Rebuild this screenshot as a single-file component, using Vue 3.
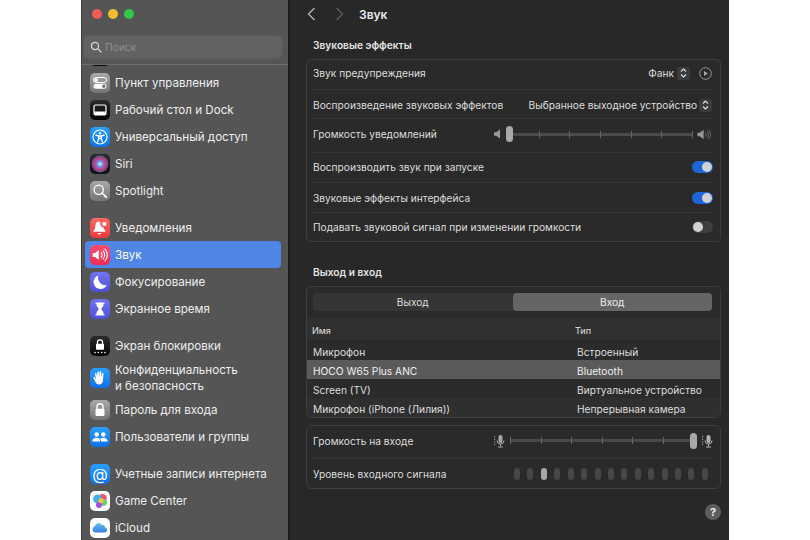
<script setup>
const groups = [
  [{ k: 'dock0', t: '' }, { k: 'cc', t: 'Пункт управления' }, { k: 'dock', t: 'Рабочий стол и Dock' }, { k: 'acc', t: 'Универсальный доступ' }, { k: 'siri', t: 'Siri' }, { k: 'spot', t: 'Spotlight' }],
  [{ k: 'bell', t: 'Уведомления' }, { k: 'sound', t: 'Звук', active: true }, { k: 'moon', t: 'Фокусирование' }, { k: 'hour', t: 'Экранное время' }],
  [{ k: 'lock', t: 'Экран блокировки' }, { k: 'hand', t: 'Конфиденциальность\nи безопасность', tall: true }, { k: 'pass', t: 'Пароль для входа' }, { k: 'users', t: 'Пользователи и группы' }],
  [{ k: 'at', t: 'Учетные записи интернета' }, { k: 'game', t: 'Game Center' }, { k: 'cloud', t: 'iCloud' }],
]
const toggles = [
  { t: 'Воспроизводить звук при запуске', on: true, c: 'h30 lift1' },
  { t: 'Звуковые эффекты интерфейса', on: true, c: 'h30' },
  { t: 'Подавать звуковой сигнал при изменении громкости', on: false, c: 'h29' },
]
const devices = [
  { n: 'Микрофон', t: 'Встроенный' },
  { n: 'HOCO W65 Plus ANC', t: 'Bluetooth', sel: true },
  { n: 'Screen (TV)', t: 'Виртуальное устройство' },
  { n: 'Микрофон (iPhone (Лилия))', t: 'Непрерывная камера' },
]
const ticks = 7
const levels = Array.from({ length: 15 }, (_, i) => i)
</script>

<template>
  <div class="page">
    <div class="window">
      <aside class="sidebar">
        <div class="lights"><i class="red"></i><i class="yellow"></i><i class="green"></i></div>
        <div class="search">
          <svg width="12" height="12" viewBox="0 0 12 12" fill="none" stroke="#d8d8d8" stroke-width="1.2"><circle cx="5" cy="5" r="3.6"/><path d="M7.7 7.7 11 11" stroke-linecap="round"/></svg>
          <span>Поиск</span>
        </div>
        <div class="list">
          <div class="list-inner">
            <div v-for="(g, gi) in groups" :key="gi" class="group">
              <div v-for="item in g" :key="item.k" class="row" :class="{ active: item.active, tall: item.tall }">
                <span class="ico" :class="'i-' + item.k">
                  <svg v-if="item.k === 'cc'" viewBox="0 0 20 20"><rect x="3.5" y="4.5" width="13" height="5" rx="2.5" fill="none" stroke="#fff" stroke-width="1"/><circle cx="6.2" cy="7" r="1.9" fill="#fff"/><rect x="3.5" y="10.8" width="13" height="5" rx="2.5" fill="#fff"/><circle cx="13.8" cy="13.3" r="1.7" fill="#777"/></svg>
                  <svg v-else-if="item.k === 'dock'" viewBox="0 0 20 20"><rect x="4" y="5" width="12" height="10" rx="1.5" fill="none" stroke="#fff" stroke-width="1.2"/><rect x="4" y="11.5" width="12" height="3.5" fill="#fff"/></svg>
                  <svg v-else-if="item.k === 'acc'" viewBox="0 0 20 20"><circle cx="10" cy="10" r="7" fill="none" stroke="#fff" stroke-width="1.2"/><circle cx="10" cy="6.2" r="1.2" fill="#fff"/><path d="M5.8 8.2 8.7 9v2.5L7.6 15M14.2 8.2 11.3 9v2.5l1.1 3.5M8.7 9h2.6M8.7 11.5h2.6" fill="none" stroke="#fff" stroke-width="1.3" stroke-linecap="round"/></svg>
                  <svg v-else-if="item.k === 'siri'" viewBox="0 0 20 20"><defs><radialGradient id="sg" cx=".5" cy=".5" r=".55"><stop offset="0" stop-color="#e4f6ff"/><stop offset=".3" stop-color="#6d8fe0"/><stop offset=".65" stop-color="#c8347f"/><stop offset="1" stop-color="#1f6f78"/></radialGradient></defs><circle cx="10" cy="10" r="8.400" fill="url(#sg)"/></svg>
                  <svg v-else-if="item.k === 'spot'" viewBox="0 0 20 20" fill="none" stroke="#fff"><circle cx="8.7" cy="8.7" r="4.6" stroke-width="1.3"/><path d="m12.2 12.2 4 4" stroke-width="1.9" stroke-linecap="round"/></svg>
                  <svg v-else-if="item.k === 'bell'" viewBox="0 0 20 20" fill="#fff"><path d="M9.4 3.6c-2.8 0-4 2.100-4 4.600 0 2.600-1.400 3.800-2 4.700-.3.5 0 .9.5.9h11c.6 0 .8-.4.5-.9-.7-.9-1.700-1.800-1.900-3.600-2 0-3.500-1.700-3.200-3.900-.2-1-.4-1.800-.9-1.800Z"/><circle cx="14.4" cy="6" r="2.1"/><path d="M7.500 15h3.900a2 2 0 0 1-3.900 0Z"/></svg>
                  <svg v-else-if="item.k === 'sound'" viewBox="0 0 20 20"><path d="M2.700 8h2.400l3.700-3.100v10.200L5.100 12H2.700Z" fill="#fff"/><path d="M11 7.600a3.400 3.400 0 0 1 0 4.800M13 5.800a6 6 0 0 1 0 8.400M15 4.200a8.400 8.400 0 0 1 0 11.600" fill="none" stroke="#fff" stroke-width="1.100" stroke-linecap="round"/></svg>
                  <svg v-else-if="item.k === 'moon'" viewBox="0 0 20 20"><path d="M8.200 3.400a7 7 0 1 0 8.600 9.700c-5 .8-9.800-3.900-8.600-9.700Z" fill="#fff"/></svg>
                  <svg v-else-if="item.k === 'hour'" viewBox="0 0 20 20"><path d="M5.500 3.500h9v1.300h-1V6c0 2-2 2.800-2.400 4 .4 1.200 2.400 2 2.400 4v1.200h1v1.300h-9v-1.300h1V14c0-2 2-2.800 2.400-4-.4-1.200-2.400-2-2.400-4V4.800h-1Z" fill="#fff"/></svg>
                  <svg v-else-if="item.k === 'lock'" viewBox="0 0 20 20" fill="#fff"><path d="M7.400 8V6.400a2.600 2.600 0 0 1 5.200 0V8" fill="none" stroke="#fff" stroke-width="1.200"/><rect x="6" y="7.800" width="8" height="6" rx="1"/><circle cx="5" cy="16.500" r=".8"/><circle cx="8.300" cy="16.500" r=".8"/><circle cx="11.700" cy="16.500" r=".8"/><circle cx="15" cy="16.500" r=".8"/></svg>
                  <svg v-else-if="item.k === 'hand'" viewBox="0 0 20 20"><path d="M5 5.800c0-1 1.300-1 1.500 0l.7 3.400.1-5c0-1.100 1.500-1.100 1.600 0l.2 4.700.6-5.300c.1-1 1.600-.9 1.500.2l-.3 5.400 1.100-3.900c.3-1 1.600-.6 1.400.4L13 12.500c-.3 2.500-1.600 4-3.900 4-1.900 0-2.900-1-3.800-2.700L3.400 10.300c-.5-1 .7-1.700 1.400-.7l1.100 1.700Z" fill="#fff"/></svg>
                  <svg v-else-if="item.k === 'pass'" viewBox="0 0 20 20"><path d="M7 9V6.800a3 3 0 0 1 6 0V9" fill="none" stroke="#fff" stroke-width="1.400"/><rect x="5.500" y="8.800" width="9" height="7.200" rx="1.200" fill="#fff"/></svg>
                  <svg v-else-if="item.k === 'users'" viewBox="0 0 20 20" fill="#fff"><circle cx="6.700" cy="7.500" r="2.300"/><circle cx="13.300" cy="7.500" r="2.300"/><path d="M2.300 14.500c0-2.400 2-3.700 4.400-3.700s3.600 1 3.600 3.700ZM11 14.500c.1-1.300-.3-2.400-1-3 1-.5 2-.7 3.300-.7 2.400 0 4.400 1.300 4.400 3.700Z"/></svg>
                  <span v-else-if="item.k === 'at'" class="at">@</span>
                  <svg v-else-if="item.k === 'game'" viewBox="0 0 20 20"><circle cx="12.600" cy="7.300" r="4.200" fill="#f0536b"/><circle cx="7.500" cy="7.800" r="4.400" fill="#3fb0ea"/><circle cx="13.500" cy="11.500" r="3.400" fill="#63cf6b"/><circle cx="9" cy="14" r="3" fill="#a24ee0"/><circle cx="11" cy="9.500" r="2.600" fill="#f2c53a"/></svg>
                  <svg v-else-if="item.k === 'cloud'" viewBox="0 0 20 20"><defs><linearGradient id="cg" x1="0" y1="0" x2="0" y2="1"><stop offset="0" stop-color="#5ec0f5"/><stop offset="1" stop-color="#3a7fe0"/></linearGradient></defs><path d="M5.200 14.500a3 3 0 0 1-.5-5.900 3.900 3.900 0 0 1 7.300-1.500 3.100 3.100 0 0 1 3.400 2.400 2.600 2.600 0 0 1-.3 5Z" fill="url(#cg)"/></svg>
                </span>
                <span class="label">{{ item.t }}</span>
              </div>
            </div>
          </div>
        </div>
      </aside>

      <main class="main">
        <header class="topbar">
          <svg class="back" width="9" height="14" viewBox="0 0 9 14" fill="none" stroke="#b4b4b4" stroke-width="1.300"><path d="M7.500 1 1.500 7l6 6"/></svg>
          <svg class="fwd" width="9" height="14" viewBox="0 0 9 14" fill="none" stroke="#5e5e5e" stroke-width="1.300"><path d="m1.500 1 6 6-6 6"/></svg>
          <h1>Звук</h1>
        </header>

        <h2 class="h-first">Звуковые эффекты</h2>
        <section class="card">
          <div class="cell h29 lift">
            <span>Звук предупреждения</span>
            <div class="ctl">
              <span>Фанк</span>
              <span class="stepper"><svg width="7" height="10" viewBox="0 0 7 10" fill="none" stroke="#e2e2e2" stroke-width="1.100"><path d="m1 3.500 2.500-2.500L6 3.500M1 6.500 3.500 9 6 6.500"/></svg></span>
              <svg class="play" width="13" height="13" viewBox="0 0 13 13"><circle cx="6.500" cy="6.500" r="5.800" fill="none" stroke="#a5a5a5" stroke-width=".9"/><path d="M5 4v5l4-2.500Z" fill="#a5a5a5"/></svg>
            </div>
          </div>
          <div class="cell h29 drop">
            <span>Воспроизведение звуковых эффектов</span>
            <div class="ctl ctl-b">
              <span>Выбранное выходное устройство</span>
              <span class="stepper"><svg width="7" height="10" viewBox="0 0 7 10" fill="none" stroke="#e2e2e2" stroke-width="1.100"><path d="m1 3.500 2.500-2.500L6 3.500M1 6.500 3.500 9 6 6.500"/></svg></span>
            </div>
          </div>
          <div class="cell h34 lift">
            <span>Громкость уведомлений</span>
            <div class="slider-wrap">
              <svg width="9" height="10" viewBox="0 0 9 10"><path d="M1 3.200h2.200L7 .6v8.800L3.200 6.800H1Z" fill="#9a9a9a"/></svg>
              <div class="slider s1">
                <div class="track"><i v-for="n in ticks" :key="n"></i></div>
                <b class="thumb thumb-l"></b>
              </div>
              <svg width="15" height="11" viewBox="0 0 15 11"><path d="M.5 3.700h2.300L6.600.8v9.400L2.800 7.300H.5Z" fill="#9a9a9a"/><path d="M8.300 3.500a2.800 2.800 0 0 1 0 4M10 2a5 5 0 0 1 0 7M11.700.8a7 7 0 0 1 0 9.400" fill="none" stroke="#777" stroke-width=".8"/></svg>
            </div>
          </div>
          <div v-for="r in toggles" :key="r.t" class="cell" :class="r.c">
            <span>{{ r.t }}</span>
            <span class="toggle" :class="{ on: r.on }"><i></i></span>
          </div>
        </section>

        <h2 class="h-second">Выход и вход</h2>
        <section class="card card-io">
          <div class="seg-wrap">
            <div class="seg">
              <span>Выход</span>
              <span class="seg-on">Вход</span>
            </div>
          </div>
          <div class="thead"><span class="c1">Имя</span><span>Тип</span></div>
          <div v-for="(d, i) in devices" :key="d.n" class="trow" :class="{ sel: d.sel, alt: i % 2 === 1 && !d.sel }">
            <span class="c1">{{ d.n }}</span><span>{{ d.t }}</span>
          </div>
        </section>

        <section class="card card-in">
          <div class="cell h32 lift3">
            <span>Громкость на входе</span>
            <div class="slider-wrap in">
              <svg width="11" height="14" viewBox="0 0 11 14"><rect x="4.500" y="1" width="4" height="8" rx="2" fill="#a8a8a8"/><path d="M3 6.500a3.500 3.500 0 0 0 7 0M6.500 10v2.500M4 13h5" fill="none" stroke="#a8a8a8"/><path d="M.7 2v10" stroke="#a8a8a8" stroke-dasharray="1.200 1.400"/></svg>
              <div class="slider s2">
                <div class="track"><i v-for="n in ticks" :key="n"></i></div>
                <b class="thumb thumb-r"></b>
              </div>
              <svg width="11" height="14" viewBox="0 0 11 14"><rect x="4.500" y="1" width="4" height="8" rx="2" fill="#b4b4b4"/><path d="M3 6.500a3.500 3.500 0 0 0 7 0M6.500 10v2.500M4 13h5" fill="none" stroke="#b4b4b4"/><path d="M.7 2v10" stroke="#b4b4b4" stroke-dasharray="1.200 1.400"/></svg>
            </div>
          </div>
          <div class="cell h30">
            <span>Уровень входного сигнала</span>
            <div class="levels"><i v-for="l in levels" :key="l" :class="{ lit: l === 2 }"></i></div>
          </div>
        </section>

        <div class="help-row"><span class="help">?</span></div>
      </main>
    </div>
  </div>
</template>

<style>
html, body { margin: 0; background: #fff; }
</style>

<style scoped>
.page { width: 810px; height: 540px; background: #fff; overflow: hidden; font-family: Inter, "Noto Sans", sans-serif; font-size: 10.2px; color: #dedede; }
.window { width: 648px; height: 540px; margin-left: 81px; display: flex; background: #282828; }
.sidebar { width: 209px; flex: none; background: #555; display: flex; flex-direction: column; box-sizing: border-box; border-right: 2px solid #1d1d1d; box-shadow: inset 1px 0 0 #3c3c3c; }
.lights { height: 36px; flex: none; display: flex; gap: 6px; padding: 9px 0 0 11px; box-sizing: border-box; }
.lights i { width: 10px; height: 10px; border-radius: 50%; }
.red { background: #f05b54; } .yellow { background: #f5bc2f; } .green { background: #2fc84a; }
.search { height: 22px; flex: none; margin: 0 6px 0 3px; padding-left: 6px; box-sizing: border-box; display: flex; align-items: center; gap: 3px; border-radius: 5px; background: #626262; box-shadow: 0 0 0 1px #5c5c5c; color: #8f8f8f; font-size: 10.2px; }
.list { margin-top: 6px; flex: 1; overflow: hidden; border-top: 1px solid #6b6b6b; }
.list-inner { margin-top: -23px; }
.group { padding-bottom: 10px; }
.row { height: 27px; margin: 0 7px 0 4px; padding-left: 5px; display: flex; align-items: center; gap: 5px; border-radius: 4px; color: #ededed; font-size: 11.6px; }
.row.tall { height: 37px; }
.row.active { background: #4f86e6; color: #fff; }
.label { white-space: pre-line; line-height: 16px; }
.ico { width: 20px; height: 20px; flex: none; border-radius: 5px; display: flex; align-items: center; justify-content: center; overflow: hidden; }
.ico svg { width: 20px; height: 20px; display: block; }
.i-dock0, .i-dock, .i-lock { background: linear-gradient(#2b2b2b, #050505); }
.i-cc, .i-spot, .i-pass { background: linear-gradient(#a9a9a9, #747474); }
.i-acc, .i-hand, .i-users, .i-at { background: linear-gradient(#2aa0fb, #0f6fe8); }
.i-siri { background: linear-gradient(#2a2a38, #0e0e18); }
.i-bell { background: linear-gradient(#fb6a62, #f0383f); }
.i-sound { background: linear-gradient(#fb5070, #f02a50); }
.i-moon, .i-hour { background: linear-gradient(#7274ee, #4f4fd8); }
.i-game, .i-cloud { background: #fff; }
.at { color: #fff; font-size: 16px; line-height: 20px; }

.main { flex: 1; min-width: 0; box-sizing: border-box; padding: 0 8px 0 16px; display: flex; flex-direction: column; }
.topbar { height: 28px; flex: none; display: flex; align-items: center; }
.back { margin-left: 1px; }
.fwd { margin-left: 19px; }
h1 { margin: 0 0 0 15px; font-size: 12px; font-weight: 600; color: #e8e8e8; }
h2 { margin: 0; font-size: 10.2px; font-weight: 600; color: #e4e4e4; line-height: 14px; }
.h-first { margin: 10px 0 7px 7px; }
.h-second { margin: 23px 0 7px 7px; }
.card { border: 1px solid #3e3e3e; border-radius: 5px; background: #2a2a2a; box-sizing: border-box; }
.cell { margin: 0 7px 0 6px; display: flex; align-items: center; justify-content: space-between; border-top: 1px solid #363636; box-sizing: border-box; }
.cell:first-child { border-top: 0; }
.h29 { height: 29px; } .h30 { height: 30px; } .h32 { height: 32px; } .h34 { height: 34px; }
.lift { padding-bottom: 3px; }
.lift1 { padding-bottom: 1px; }
.lift3 { padding-bottom: 3px; }
.drop { padding-top: 2px; }
.ctl { display: flex; align-items: center; gap: 3px; }
.ctl-b { margin-right: 1px; gap: 2px; }
.play { margin-left: 6px; margin-right: 1px; }
.stepper { width: 13px; height: 13px; border-radius: 3px; background: #3b3b3b; display: flex; align-items: center; justify-content: center; }
.slider-wrap { display: flex; align-items: center; gap: 4px; margin-right: 1px; }
.slider { position: relative; height: 16px; display: flex; align-items: center; justify-content: flex-end; }
.s1 { width: 187px; }
.s1 .track { width: 185px; }
.s2 { width: 184px; margin-right: 3px; }
.in { gap: 5px; margin-right: 0; }
.track { width: 100%; height: 3px; background: #4b4b4b; border-radius: 2px; display: flex; justify-content: space-between; align-items: center; }
.track i { width: 1px; height: 7px; background: #666; }
.thumb { position: absolute; top: 0; width: 7px; height: 16px; border-radius: 4px; background: #a8a8a8; }
.thumb-l { left: 0; }
.thumb-r { right: -3px; }
.toggle { width: 21px; height: 12px; border-radius: 6px; background: #3f3f3f; display: flex; align-items: center; padding: 0 1px; box-sizing: border-box; }
.toggle i { width: 10px; height: 10px; border-radius: 50%; background: #d2d2d2; }
.toggle.on { background: #1c66d8; justify-content: flex-end; }

.card-io { overflow: hidden; height: 132px; }
.seg-wrap { height: 31px; padding: 6px 8px 0 6px; box-sizing: border-box; }
.seg { height: 18px; border-radius: 4px; background: #353535; display: grid; grid-template-columns: 1fr 1fr; text-align: center; line-height: 18px; }
.seg-on { background: #656565; border-radius: 4px; color: #eee; }
.thead { height: 23px; display: flex; align-items: center; background: #303030; font-size: 9px; padding: 3px 0 0 5px; color: #d0d0d0; font-weight: 500; box-sizing: border-box; border-bottom: 1px solid #262626; }
.thead .c1 { width: 263px; }
.trow { height: 19px; display: flex; align-items: center; padding: 2px 0 0 6px; background: #2b2b2b; box-sizing: border-box; }
.trow .c1 { width: 264px; }
.trow.sel { background: #5a5a5a; color: #f0f0f0; }
.trow.alt { background: #2f2f2f; }
.card-in { margin-top: 7px; }
.levels { width: 194px; margin-right: 5px; display: flex; justify-content: space-between; }
.levels i { width: 6px; height: 12px; border-radius: 3px; background: #464646; }
.levels i.lit { background: #a6a6a6; }
.help-row { display: flex; justify-content: flex-end; margin-top: 15px; }
.help { width: 16px; height: 16px; border-radius: 50%; background: #5d5d5d; color: #eee; font-size: 11px; font-weight: 700; text-align: center; line-height: 16px; }
</style>
